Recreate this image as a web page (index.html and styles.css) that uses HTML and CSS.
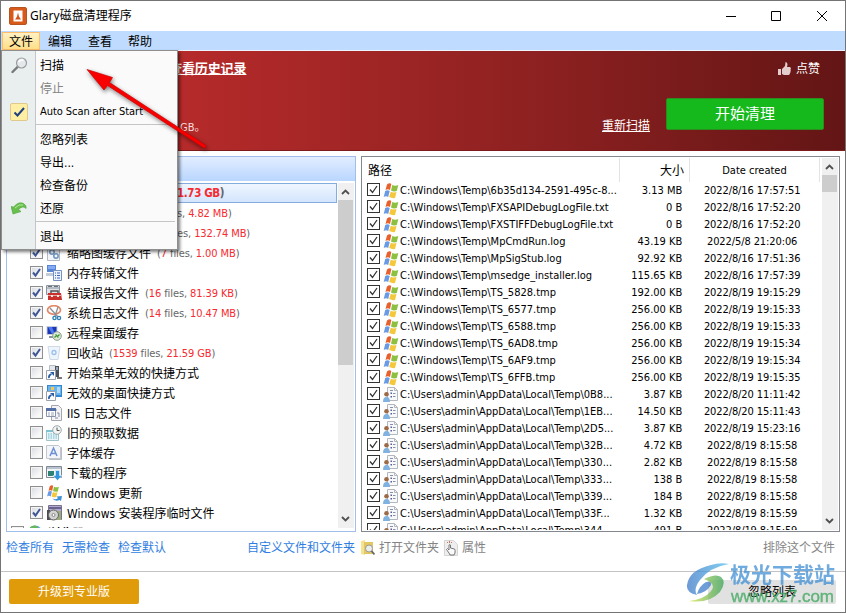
FILE: index.html
```html
<!DOCTYPE html>
<html lang="zh-CN">
<head>
    <meta charset="UTF-8">
    <meta name="viewport" content="width=device-width, initial-scale=1.0">
    <title>Glary磁盘清理程序</title>
    <link rel="stylesheet" href="styles.css">
</head>
<body>
    <!-- icon shapes -->
    <svg class="defs" width="0" height="0">
        <symbol id="flag" viewBox="0 0 16 16">
            <path d="M4 1.500q2.500-2 4.300-.5L7 7q-2.300-1.300-4.500 0z" fill="#e8602c"/>
            <path d="M9.300 2q3 1.300 6 0L13.800 8q-3 1-5.800-.5z" fill="#8cc040"/>
            <path d="M2.200 8q2.300-1.300 4.500 0L5.200 14Q3 12.500.700 14z" fill="#6a9ae6"/>
            <path d="M7.700 8.700q2.800 1.300 5.800.3L12 15q-2.800.5-5.800-1z" fill="#f5c83c"/>
        </symbol>
        <symbol id="userdoc" viewBox="0 0 16 16">
            <path d="M4.500.5h7l3 3v10h-10z" fill="#f8f9fb" stroke="#b4b8bd"/>
            <path d="M11.500.5v3h3" fill="none" stroke="#b4b8bd"/>
            <path d="M7 3.500h3M10 6.500h2.500M10 9.500h2.500" stroke="#8a8ea8"/>
            <path d="M7.500 5.500h1.500v1.500H7.500zM7.500 9h1.500v1.500H7.500z" fill="#565c9c"/>
            <path d="M0 15q0-5 3.500-5t3.500 5z" fill="#7fb2e0"/>
            <circle cx="3.500" cy="7.300" r="2.300" fill="#9c6a46"/>
        </symbol>
        <symbol id="gears" viewBox="0 0 16 16">
            <path d="M1.500.5h9l3 3v12h-12z" fill="#f2f5f9" stroke="#b2b9c2"/>
            <circle cx="6" cy="7" r="2.200" fill="none" stroke="#6f94c2" stroke-width="1.500"/>
            <circle cx="10" cy="11" r="2.200" fill="none" stroke="#6f94c2" stroke-width="1.500"/>
        </symbol>
        <symbol id="dump" viewBox="0 0 16 16">
            <path d="M1 0h9v7H1z" fill="#5685d8"/><path d="M2 1h7v3H2z" fill="#86aaf0"/>
            <path d="M0 8h8v3H0z" fill="#c4ccd8"/>
            <path d="M7.500 5.500h8v10h-8z" fill="#eef4ff" stroke="#7890bd"/>
            <path d="M9 8h1M11 8h3M9 10.500h1M11 10.500h3M9 13h1M11 13h3" stroke="#3b66b8"/>
        </symbol>
        <symbol id="toolbox" viewBox="0 0 16 16">
            <path d="M.5.500h13v9H.5z" fill="#dfe3e8" stroke="#8c949e"/><path d="M1 3h12" stroke="#8c949e"/>
            <path d="M2 1.500h4M8 1.500h4" stroke="#6a7280"/>
            <path d="M5 8V6h7v2" fill="none" stroke="#555" stroke-width="1.500"/>
            <path d="M2 8h13l1 7H2z" fill="#c9302b"/><path d="M2 10.500h14" stroke="#f2a49e"/>
            <path d="M5 10h2v2H5zM11 10h2v2h-2z" fill="#eee"/>
        </symbol>
        <symbol id="scissors" viewBox="0 0 16 16">
            <ellipse cx="8" cy="5" rx="6.500" ry="4.300" fill="none" stroke="#e08868" stroke-width="1.700"/>
            <path d="M4 3l8 9M12 2L9 11" stroke="#8a919a" stroke-width="1.300"/>
            <circle cx="8.500" cy="13" r="1.600" fill="none" stroke="#2f80b5" stroke-width="1.400"/>
            <circle cx="13" cy="13" r="1.600" fill="none" stroke="#2f80b5" stroke-width="1.400"/>
        </symbol>
        <symbol id="remote" viewBox="0 0 16 16">
            <path d="M.5 1h11v9H.5z" fill="#c9ced9"/><path d="M1.500 2h9v7h-9z" fill="#1937b8"/><path d="M2 2h4l3 7H6z" fill="#4f78e8"/>
            <path d="M3 11h6v2H3z" fill="#8d94a1"/>
            <circle cx="11" cy="11" r="4.300" fill="#dfe8db" stroke="#8a9a87"/>
            <path d="M8.500 12.500l2-2-1-1M13.500 9.500l-2 2 1 1" fill="none" stroke="#3e9a35" stroke-width="1.400"/>
        </symbol>
        <symbol id="bin" viewBox="0 0 16 16">
            <path d="M2 1.500l12 0-2 13H4z" fill="#edf4fb" stroke="#cfdae6"/>
            <circle cx="8" cy="7.500" r="2" fill="none" stroke="#9bc0ee" stroke-width="1.300"/>
        </symbol>
        <symbol id="shortcut" viewBox="0 0 16 16">
            <path d="M3.500.5h6v6h-6z" fill="#e4e8ec" stroke="#b5bbc2"/><path d="M9 1h4v11H9z" fill="#4b535e"/><path d="M10 2h2v3h-2z" fill="#9ba7b5"/>
            <path d="M11 12h5v2h-5z" fill="#777"/>
            <path d="M.5 5.500h9v9h-9z" fill="#fff" stroke="#9aa3ad"/>
            <path d="M3 13q-.5-3 2.500-4" fill="none" stroke="#2b5ea8" stroke-width="1.800"/><path d="M4 7h4v4z" fill="#2b5ea8"/>
        </symbol>
        <symbol id="deskcut" viewBox="0 0 16 16">
            <path d="M1 0h15v12H1z" fill="#3387d1"/><path d="M2 1h13v9H2z" fill="#67b4ef"/>
            <path d="M5 2h3v3H5z" fill="#f4c64a"/><path d="M11 3h3M11 5h3M11 7h3" stroke="#fff"/>
            <path d="M.5 6.500h9v9h-9z" fill="#fff" stroke="#9aa3ad"/>
            <path d="M3 14q-.5-3 2.500-4" fill="none" stroke="#2b5ea8" stroke-width="1.800"/><path d="M4 8h4v4z" fill="#2b5ea8"/>
        </symbol>
        <symbol id="iis" viewBox="0 0 16 16">
            <path d="M5.500.5h7l3 3v12h-10z" fill="#f3f3f6" stroke="#a5a5ad"/>
            <path d="M8 4h2v2M11 8h2v4M9 13h3" fill="none" stroke="#8a8aa5"/>
            <path d="M.5 3.500h9v8h-9z" fill="#fff" stroke="#8793ab"/><path d="M0 3h10v3H0z" fill="#536fa5"/>
            <path d="M2 8h2M5 8h3M2 10h2M5 10h3" stroke="#9aa5ba"/>
        </symbol>
        <symbol id="prefetch" viewBox="0 0 16 16">
            <path d="M.5 5.500h12v10H.5z" fill="#eaf5f8" stroke="#9fc2cb"/><path d="M0 5h12v2H0z" fill="#7ec4d3"/>
            <path d="M2 9h9M2 11h9M2 13h9" stroke="#70bbcd" stroke-dasharray="1.500 1"/>
            <circle cx="11" cy="5" r="4.300" fill="#f4f6f6" stroke="#9da8a9"/><path d="M11 2.500V5.500h2.500" fill="none" stroke="#555"/>
        </symbol>
        <symbol id="fontcache" viewBox="0 0 16 16">
            <path d="M3.500 2.500h12v12h-12z" fill="#e2e4e8" stroke="#b9bdc4"/>
            <path d="M.5.500h12l2 2v11H.5z" fill="#f3f5f8" stroke="#c2c6cd"/>
            <path d="M4 11l3.500-8 3.500 8M5.500 8.500h4" fill="none" stroke="#6c8fd6" stroke-width="1.500"/>
        </symbol>
        <symbol id="download" viewBox="0 0 16 16">
            <path d="M.5 1.500h15v11H.5z" fill="#f2f4f6" stroke="#7d8894"/><path d="M1 2h14v2H1z" fill="#b9c3cf"/>
            <path d="M2 6h6v5H2z" fill="#2f8173"/>
            <path d="M9.500 5.500h4v5H16L11.500 15.500 7 10.500h2.500z" fill="#2e96de" stroke="#fff" stroke-width=".5"/>
        </symbol>
        <symbol id="winupdate" viewBox="0 0 16 16">
            <use href="#flag" width="14" height="13"/>
            <path d="M6 13q3.500 2.500 6 0l-1.500-1.500 5.500-.5-1 5-1.500-1q-4.500 2-7.500-2z" fill="#3d8fd6"/>
        </symbol>
        <symbol id="installer" viewBox="0 0 16 16">
            <path d="M2.500.5h13v14h-13z" fill="#b2aad0" stroke="#77718e"/><path d="M3 3h12" stroke="#6a648d" stroke-width="2"/>
            <path d="M1 5h3v10H1z" fill="#4c4c50"/><path d="M9 6h6v9H9z" fill="#9cab7e"/>
            <circle cx="7.500" cy="10" r="5" fill="#d3d3d3" stroke="#666"/><circle cx="7.500" cy="10" r="1.500" fill="#fff" stroke="#888"/>
        </symbol>
        <symbol id="globe" viewBox="0 0 16 16">
            <circle cx="8" cy="8" r="7.500" fill="#5ba7d6"/><path d="M3 2q5-3 8 0l-2 5H4z" fill="#67b85b"/>
        </symbol>
    </svg>

    <div class="window">
        <div class="titlebar">
            <svg class="logo" width="18" height="18" viewBox="0 0 18 18">
                <rect x=".5" y=".5" width="17" height="17" rx="1.500" fill="#d85a1a" stroke="#b8541f"/>
                <rect x="4.500" y="3.500" width="9" height="11" fill="#fff"/>
                <path d="M9 5.500l1 4 2 3H6l2-3z" fill="#d4541a"/>
            </svg>
            <span class="title">Glary磁盘清理程序</span>
            <svg class="controls" width="104" height="12" viewBox="0 0 104 12">
                <path d="M0 6.500h10M45.500 1.500h9v9h-9zM91 1l10 10M101 1L91 11" fill="none" stroke="#000"/>
            </svg>
        </div>

        <div class="menubar">
            <span class="menu-title active">文件</span>
            <span class="menu-title">编辑</span>
            <span class="menu-title">查看</span>
            <span class="menu-title">帮助</span>
        </div>

        <div class="banner">
            <div class="banner-left">
                <span class="history">查看历史记录</span>
                <span class="freed">GB。</span>
            </div>
            <span class="rescan">重新扫描</span>
            <div class="banner-right">
                <div class="like">
                    <svg width="13" height="14" viewBox="0 0 13 14">
                        <path d="M0 7h3v6H0zM4 7l3-3 .5-4q2 0 2 2.500L9 5h3q1.500 1 .5 2.500.5 1 0 2 0 1-.5 1.800-.2 1.700-1.500 1.700H6l-2-1z" fill="#e3cccc"/>
                    </svg>
                    <span>点赞</span>
                </div>
                <div class="clean-btn">开始清理</div>
            </div>
        </div>

        <div class="panels">
            <div class="tree">
                <div class="tree-head"></div>
                <div class="tree-body">
                    <div class="tree-list" id="treeList"></div>
                    <div class="scrollbar">
                        <svg class="arrow" width="9" height="6" viewBox="0 0 9 6"><path d="M1 5l3.500-3.500L8 5"/></svg>
                        <div class="thumb thumb-tree"></div>
                        <svg class="arrow down" width="9" height="6" viewBox="0 0 9 6"><path d="M1 1l3.500 3.500L8 1"/></svg>
                    </div>
                </div>
            </div>

            <div class="files">
                <div class="files-main">
                    <div class="files-head">
                        <span class="col-path">路径</span>
                        <span class="col-size">大小</span>
                        <span class="col-date">Date created</span>
                    </div>
                    <div class="files-list" id="filesList"></div>
                </div>
                <div class="scrollbar">
                    <svg class="arrow" width="9" height="6" viewBox="0 0 9 6"><path d="M1 5l3.500-3.500L8 5"/></svg>
                    <div class="thumb thumb-files"></div>
                    <svg class="arrow down" width="9" height="6" viewBox="0 0 9 6"><path d="M1 1l3.500 3.500L8 1"/></svg>
                </div>
            </div>
        </div>

        <div class="links">
            <div class="links-left">
                <span>检查所有</span>
                <span>无需检查</span>
                <span>检查默认</span>
                <span class="custom">自定义文件和文件夹</span>
            </div>
            <div class="links-right">
                <svg width="14" height="16" viewBox="0 0 14 16">
                    <path d="M0 1l4-1v15l-4-1z" fill="#f5e48f"/><path d="M3 2h9v12H3z" fill="#e3c765"/>
                    <circle cx="8" cy="8.500" r="3.500" fill="#eceeea" stroke="#999"/><path d="M10.500 11l3 3.500" stroke="#666" stroke-width="1.800"/>
                </svg>
                <span class="open">打开文件夹</span>
                <svg width="14" height="16" viewBox="0 0 14 16">
                    <path d="M.5.500h9l4 4v11H.5z" fill="#eee" stroke="#d5d5d5"/>
                    <path d="M5 13L2.500 9.500l1-1L5 10V5q1-1 1.500 0v3l4 1q1 1 .5 4l-1 2H6z" fill="#fafafa" stroke="#777"/>
                    <path d="M3 2l1 1M5.500 1v2M8 2L7 3" stroke="#c4795d"/>
                </svg>
                <span>属性</span>
                <span class="exclude">排除这个文件</span>
            </div>
        </div>

        <div class="footer">
            <div class="upgrade-btn">升级到专业版</div>
            <div class="ignore-btn">忽略列表</div>
        </div>
    </div>

    <div class="dropdown">
        <div class="item">
            <span class="gutter"><svg width="17" height="17" viewBox="0 0 17 17">
                <path d="M1.500 15l6-6" stroke="#77797b" stroke-width="2.400" stroke-linecap="round"/>
                <circle cx="10.500" cy="6" r="5" fill="#e4e8ea" stroke="#999da0" stroke-width="1.200"/>
                <path d="M7.500 5q2-3 5-1.500" fill="none" stroke="#fff" stroke-width="1.500"/>
            </svg></span>扫描
        </div>
        <div class="item disabled"><span class="gutter"></span>停止</div>
        <div class="item">
            <span class="gutter"><svg width="18" height="18" viewBox="0 0 18 18">
                <rect x=".5" y=".5" width="17" height="17" rx="1.500" fill="#ffefa5" stroke="#e0c98a"/>
                <path d="M4.500 9.500l3 3 6.500-7.500" fill="none" stroke="#1f3f7f" stroke-width="2"/>
            </svg></span><span class="latin">Auto Scan after Start</span>
        </div>
        <div class="sep"></div>
        <div class="item"><span class="gutter"></span>忽略列表</div>
        <div class="item"><span class="gutter"></span>导出...</div>
        <div class="item"><span class="gutter"></span>检查备份</div>
        <div class="item">
            <span class="gutter"><svg width="16" height="13" viewBox="0 0 16 13">
                <path d="M0 4.500L2.500 5Q8-1 12.500 1.500 16 3.500 15 6.500 12 3 7.500 7.500L10 9.500 2 12z" fill="#69bf4d" stroke="#4aa53a" stroke-width=".6"/>
                <path d="M4 6q4-4.500 8-3" fill="none" stroke="#b6e8a0"/>
            </svg></span>还原
        </div>
        <div class="sep"></div>
        <div class="item"><span class="gutter"></span>退出</div>
    </div>

    <svg class="pointer" width="130" height="95" viewBox="80 60 130 95">
        <path d="M87 69.500L112.500 77.500 109.500 82.500 206 145.500Q206.500 148 204 148L107.500 85.500 104 90z" fill="#f80000" stroke="#c00" stroke-width=".7"/>
    </svg>

    <div class="watermark">
        <svg width="44" height="42" viewBox="0 0 44 42">
            <defs>
                <linearGradient id="swoosh" x1="0" x2="1"><stop offset="0" stop-color="#3f79c8"/><stop offset="1" stop-color="#55c2ee"/></linearGradient>
                <linearGradient id="leaf" x1="0" x2="1"><stop offset="0" stop-color="#d6e14c"/><stop offset="1" stop-color="#3aa45a"/></linearGradient>
            </defs>
            <path d="M43 2Q24 5 14 18 7 27 11 33 0 31 1 23 3 8 25 3 34 0 43 2z" fill="url(#swoosh)"/>
            <path d="M18 17Q30 11 35 15 41 20 34 30 23 42 3 39 19 37 25 29 31 22 18 17z" fill="url(#leaf)"/>
            <path d="M11 32Q13 24 20 20 26 19 25 23 20 31 11 32z" fill="#3f7dcb"/>
        </svg>
        <div class="mark-text">
            <div class="mark-name">极光下载站</div>
            <div class="mark-url">www.xz7.com</div>
        </div>
    </div>

    <script>
        const treeRows = [
            [1, 'gears', '缩略图缓存文件', '7', '1.00 MB'],
            [1, 'dump', '内存转储文件'],
            [1, 'toolbox', '错误报告文件', '16', '81.39 KB'],
            [1, 'scissors', '系统日志文件', '14', '10.47 MB'],
            [0, 'remote', '远程桌面缓存'],
            [1, 'bin', '回收站', '1539', '21.59 GB'],
            [0, 'shortcut', '开始菜单无效的快捷方式'],
            [0, 'deskcut', '无效的桌面快捷方式'],
            [0, 'iis', 'IIS 日志文件'],
            [0, 'prefetch', '旧的预取数据'],
            [0, 'fontcache', '字体缓存'],
            [0, 'download', '下载的程序'],
            [0, 'winupdate', 'Windows 更新'],
            [1, 'installer', 'Windows 安装程序临时文件']
        ];
        const win = 'C:\\Windows\\Temp\\';
        const user = 'C:\\Users\\admin\\AppData\\Local\\Temp\\';
        const fileRows = [
            [win + '6b35d134-2591-495c-8...', '3.13 MB', '2022/8/16 17:57:51'],
            [win + 'FXSAPIDebugLogFile.txt', '0 B', '2022/8/16 17:52:20'],
            [win + 'FXSTIFFDebugLogFile.txt', '0 B', '2022/8/16 17:52:20'],
            [win + 'MpCmdRun.log', '43.19 KB', '2022/5/8 21:20:06'],
            [win + 'MpSigStub.log', '92.92 KB', '2022/8/16 17:51:36'],
            [win + 'msedge_installer.log', '115.65 KB', '2022/8/16 17:57:39'],
            [win + 'TS_5828.tmp', '192.00 KB', '2022/8/19 19:15:29'],
            [win + 'TS_6577.tmp', '256.00 KB', '2022/8/19 19:15:33'],
            [win + 'TS_6588.tmp', '256.00 KB', '2022/8/19 19:15:33'],
            [win + 'TS_6AD8.tmp', '256.00 KB', '2022/8/19 19:15:34'],
            [win + 'TS_6AF9.tmp', '256.00 KB', '2022/8/19 19:15:34'],
            [win + 'TS_6FFB.tmp', '256.00 KB', '2022/8/19 19:15:35'],
            [user + '0B8...', '3.87 KB', '2022/8/20 11:11:42'],
            [user + '1EB...', '14.50 KB', '2022/8/20 15:11:43'],
            [user + '2D5...', '3.87 KB', '2022/8/19 15:23:16'],
            [user + '32B...', '4.72 KB', '2022/8/19 8:15:58'],
            [user + '330...', '2.82 KB', '2022/8/19 8:15:58'],
            [user + '333...', '138 B', '2022/8/19 8:15:58'],
            [user + '339...', '184 B', '2022/8/19 8:15:58'],
            [user + '33F...', '1.32 KB', '2022/8/19 8:15:59'],
            [user + '344...', '491 B', '2022/8/19 8:15:59']
        ];

        const icon = id => `<svg class="icon" width="16" height="16"><use href="#${id}"/></svg>`;
        const tick = '<svg width="13" height="13" viewBox="0 0 13 13"><path d="M3 6.500l2.500 3L10 3"/></svg>';

        // first rows of the system group sit behind the open menu
        let tree = `
            <div class="tree-row selected"><span class="tail tail-group"><b>1.73 GB</b>)</span></div>
            <div class="tree-row"><span class="tail">s, <b>4.82 MB</b>)</span></div>
            <div class="tree-row"><span class="tail">es, <b>132.74 MB</b>)</span></div>`;
        treeRows.forEach(([on, id, name, count, size]) => {
            const info = count ? `<span class="info">(<b>${count}</b> files, <b>${size}</b>)</span>` : '';
            tree += `<div class="tree-row"><span class="check">${on ? tick : ''}</span>${icon(id)}<span class="name">${name}</span>${info}</div>`;
        });
        tree += `<div class="tree-row group"><span class="check"></span>${icon('globe')}<span class="name">浏览器</span></div>`;
        document.getElementById('treeList').innerHTML = tree;

        document.getElementById('filesList').innerHTML = fileRows.map(([path, size, date]) => `
            <div class="file-row">
                <span class="box">${tick}</span>${icon(path.startsWith(win) ? 'flag' : 'userdoc')}
                <span class="path">${path}</span><span class="size">${size}</span><span class="date">${date}</span>
            </div>`).join('');
    </script>
</body>
</html>
```

FILE: styles.css
```css
* {
    box-sizing: border-box;
}

body {
    margin: 0;
    width: 846px;
    height: 613px;
    overflow: hidden;
    position: relative;
    font-family: "DejaVu Sans Condensed", "Noto Sans", "Noto Sans CJK SC", sans-serif;
    font-size: 12px;
    line-height: 16px;
    color: #000;
    white-space: nowrap;
}

svg {
    display: block;
    flex: none;
}

.defs {
    position: absolute;
}

.window {
    width: 846px;
    height: 613px;
    border: 1px solid #747474;
    background: #fff;
    display: flex;
    flex-direction: column;
}

.titlebar {
    height: 30px;
    display: flex;
    align-items: center;
    padding: 0 15px 1px 8px;
}

.title {
    margin-left: 3px;
    padding-top: 1px;
    flex: 1;
    font-family: "Noto Sans", "Noto Sans CJK SC", sans-serif;
}

.menubar {
    height: 20px;
    display: flex;
    background: #bfdbff;
    border-bottom: 1px solid #eef4fc;
    padding: 1px 0 0 1px;
}

.menu-title {
    width: 40px;
    height: 18px;
    line-height: 20px;
    text-align: center;
}

.menu-title.active {
    width: 38px;
    line-height: 18px;
    background: linear-gradient(#fff0c4, #ffe08a);
    border: 1px solid #ffbd69;
}

.banner {
    height: 100px;
    display: flex;
    color: #fff;
    background: linear-gradient(90deg, #c23030 0, #b52a2a 22%, #8b2020 66%, #631515 100%);
    border-bottom: 1px solid #7d1a1c;
}

.banner-left {
    width: 601px;
    padding: 10px 0 0 168px;
    display: flex;
    flex-direction: column;
}

.history {
    font-size: 13px;
    font-weight: bold;
    letter-spacing: -0.1px;
    text-decoration: underline;
}

.freed {
    margin: 43px 0 0 11px;
    font-size: 11px;
    color: #f5dede;
}

.rescan {
    width: 64px;
    padding-top: 67px;
    text-decoration: underline;
}

.banner-right {
    width: 158px;
}

.like {
    display: flex;
    align-items: center;
    gap: 5px;
    padding: 10px 0 0 112px;
}

.clean-btn {
    margin-top: 21px;
    height: 32px;
    line-height: 30px;
    text-align: center;
    font-size: 15px;
    background: #16b91c;
    border: 1px solid #2e8b1f;
    border-radius: 2px;
}

.panels {
    display: flex;
    gap: 5px;
    padding: 5px 5px 0;
    height: 381px;
}

.tree {
    width: 350px;
    height: 376px;
    border: 1px solid #a0bfec;
    display: flex;
    flex-direction: column;
}

.tree-head {
    height: 24px;
    background: linear-gradient(#e2edff, #b9d6ff);
}

.tree-body {
    display: flex;
    height: 345px;
    margin-top: 2px;
}

.tree-list {
    width: 331px;
    overflow: hidden;
}

.tree-row {
    height: 20px;
    display: flex;
    align-items: center;
    padding-left: 23px;
}

.tree-row.selected {
    background: linear-gradient(#f0f6ff, #d3e5fd);
    border: 1px solid #84acdd;
    padding-left: 22px;
    width: 330px;
}

.check {
    width: 13px;
    height: 13px;
    margin-bottom: 1px;
    flex: none;
    border: 1px solid #8e8f8f;
    background: linear-gradient(135deg, #d5d9df, #f8f8f8 70%);
    box-shadow: inset 0 0 0 1px #f4f4f4;
}

.check svg {
    margin: -1px;
}

.check path {
    fill: none;
    stroke: #3f5794;
    stroke-width: 2;
}

.icon {
    margin-left: 3px;
}

.name {
    margin: 2px 0 0 5px;
}

.info,
.tail {
    margin-top: 2px;
    font-size: 11px;
    letter-spacing: -0.1px;
    color: #666;
}

.info {
    margin-left: 6px;
}

.info b,
.tail b {
    color: #f62a30;
    font-weight: normal;
}

.tail {
    margin-left: 147px;
}

.tail-group,
.tail-group b {
    font-size: 11.500px;
    font-weight: bold;
    letter-spacing: -0.4px;
}

.tail-group {
    margin-top: 0;
}

.tree-row.group {
    padding-left: 4px;
    font-weight: bold;
}

.scrollbar {
    width: 16px;
    flex: none;
    background: #f0f0f0;
    display: flex;
    flex-direction: column;
    align-items: center;
    padding: 6px 1px 6px 0;
}

.arrow {
    fill: none;
    stroke: #505050;
    stroke-width: 1.800;
}

.arrow.down {
    margin-top: auto;
}

.thumb {
    width: 15px;
    background: #cdcdcd;
}

.thumb-tree {
    height: 165px;
    margin-top: 5px;
}

.thumb-files {
    height: 17px;
    margin-top: 5px;
}

.files {
    width: 479px;
    height: 376px;
    border: 1px solid #828790;
    display: flex;
    padding: 1px 1px 1px 0;
}

.files-main {
    width: 460px;
    height: 372px;
    overflow: hidden;
}

.files-head {
    height: 24px;
    display: flex;
    line-height: 26px;
}

.files-head span {
    height: 24px;
    border-right: 1px solid #e3e3e3;
}

.col-path {
    width: 258px;
    padding-left: 6px;
}

.col-size {
    width: 70px;
    text-align: right;
    padding-right: 5px;
}

.col-date {
    width: 130px;
    text-align: center;
    font-size: 11px;
}

.file-row {
    height: 17px;
    display: flex;
    align-items: center;
    padding-left: 5px;
    font-size: 11px;
}

.box {
    width: 13px;
    height: 13px;
    flex: none;
    margin-bottom: 2px;
    border: 1px solid #333;
}

.box svg {
    margin: -1px;
}

.box path {
    fill: none;
    stroke: #333;
    stroke-width: 1.300;
}

.path {
    width: 219px;
    margin: 1px 0 0 1px;
}

.size {
    width: 66px;
    margin-top: 1px;
    text-align: right;
}

.date {
    width: 141px;
    margin-top: 1px;
    text-align: center;
    letter-spacing: -0.1px;
}

.links {
    height: 40px;
    display: flex;
    padding: 8px 10px 0 5px;
    border-bottom: 1px solid #c3c3c3;
}

.links-left {
    width: 349px;
    display: flex;
    gap: 8px;
    color: #2f7de1;
}

.custom {
    margin-left: auto;
}

.links-right {
    flex: 1;
    display: flex;
    gap: 4px;
    padding-left: 6px;
    color: #848484;
}

.open {
    margin-right: 1px;
}

.exclude {
    margin-left: auto;
}

.footer {
    height: 40px;
    display: flex;
    justify-content: space-between;
    padding: 7px 9px 0 8px;
}

.upgrade-btn {
    width: 130px;
    height: 25px;
    line-height: 27px;
    text-align: center;
    color: #fff;
    background: #df9b0a;
    border-radius: 2px;
}

.ignore-btn {
    width: 128px;
    height: 24px;
    margin-top: 1px;
    line-height: 25px;
    text-align: center;
    background: #e1e1e1;
    border-radius: 2px;
}

.dropdown {
    position: absolute;
    left: 1px;
    top: 50px;
    width: 177px;
    height: 200px;
    padding: 3px 2px 0 0;
    border: 1px solid #8e8e8e;
    background: linear-gradient(90deg, #e9eeee 33px, #c5c5c5 33px, #c5c5c5 34px, #fafafa 34px);
    box-shadow: 2px 2px 3px rgba(0, 0, 0, 0.5);
}

.item {
    height: 23px;
    display: flex;
    align-items: center;
}

.item.disabled {
    color: #848484;
}

.gutter {
    width: 34px;
    margin-right: 4px;
    display: flex;
    justify-content: center;
}

.latin {
    font-size: 11px;
    letter-spacing: -0.05px;
}

.sep {
    height: 5px;
    margin-left: 34px;
    padding-top: 1px;
}

.sep::before {
    content: "";
    display: block;
    height: 1px;
    background: #c5c5c5;
}

.pointer {
    position: absolute;
    left: 80px;
    top: 60px;
    filter: drop-shadow(1px 2px 2px rgba(0, 0, 0, 0.5));
}

.watermark {
    position: absolute;
    left: 686px;
    top: 562px;
    display: flex;
    opacity: 0.75;
}

.mark-name {
    font-size: 21px;
    line-height: 26px;
    font-weight: bold;
    color: #3f8fd3;
}

.mark-url {
    font-family: "Liberation Sans", Arial, sans-serif;
    font-size: 17px;
    line-height: 18px;
    padding-left: 1px;
    letter-spacing: -0.1px;
    color: #35a558;
    -webkit-text-stroke: 0.4px #35a558;
}
```
